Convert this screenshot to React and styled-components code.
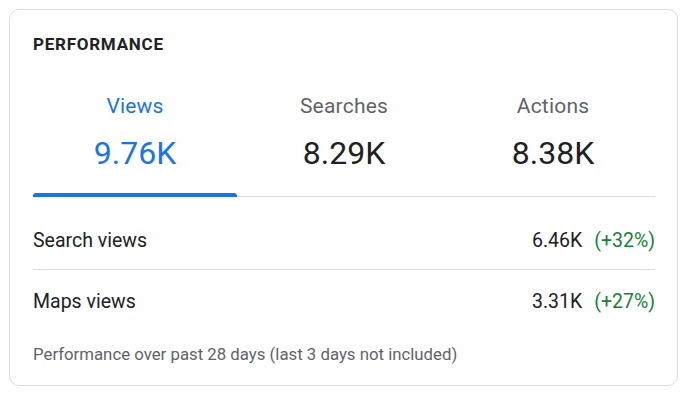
import React from 'react'
import styled, { createGlobalStyle } from 'styled-components'

const GlobalStyle = createGlobalStyle`
  body {
    margin: 0;
    background: #fff;
    font-family: Roboto, "Liberation Sans", Arial, sans-serif;
    color: #202124;
  }
`

const Page = styled.main`
  padding: 9px;
`

const Card = styled.section`
  box-sizing: border-box;
  width: 669px;
  height: 377px;
  border: 1px solid #dadce0;
  border-radius: 10px;
  padding: 24px 22px 0 23px;
  display: flex;
  flex-direction: column;
`

const Title = styled.h2`
  margin: 0;
  font-size: 17px;
  line-height: 20px;
  font-weight: 700;
  letter-spacing: 0.75px;
  color: #202124;
`

const Tabs = styled.div`
  display: grid;
  grid-template-columns: repeat(3, 1fr);
  column-gap: 5px;
  margin-top: 38px;
  border-bottom: 1px solid #dadce0;
`

const Tab = styled.div`
  display: flex;
  flex-direction: column;
  align-items: center;
  margin-bottom: -1px;
  color: ${p => (p.$active ? '#1a73e8' : '#5f6368')};
`

const TabLabel = styled.div`
  font-size: 21px;
  line-height: 28px;
  letter-spacing: 0.2px;
`

const TabValue = styled.div`
  margin-top: 13px;
  font-size: 32px;
  line-height: 40px;
  color: ${p => (p.$active ? '#1a73e8' : '#202124')};
`

const Indicator = styled.div`
  align-self: stretch;
  height: 4px;
  margin-top: 20px;
  border-radius: 3px 3px 0 0;
  background: ${p => (p.$active ? '#1a73e8' : 'transparent')};
`

const Rows = styled.div`
  margin-top: 15px;
`

const Row = styled.div`
  display: flex;
  align-items: center;
  padding: 17px 0 16px;
  font-size: 19.5px;
  line-height: 24px;
  & + & {
    border-top: 1px solid #dadce0;
    padding-top: 20px;
  }
`

const RowLabel = styled.span`
  flex: 1;
`

const RowValue = styled.span`
  color: #202124;
`

const Change = styled.span`
  margin-left: 12px;
  color: #188038;
`

const Footnote = styled.p`
  margin: 14px 0 0;
  font-size: 16.8px;
  line-height: 20px;
  color: #5f6368;
`

const tabs = [
  { label: 'Views', value: '9.76K', active: true },
  { label: 'Searches', value: '8.29K' },
  { label: 'Actions', value: '8.38K' },
]

const rows = [
  { label: 'Search views', value: '6.46K', change: '(+32%)' },
  { label: 'Maps views', value: '3.31K', change: '(+27%)' },
]

const App = () => (
  <Page>
    <GlobalStyle />
    <Card>
      <Title>PERFORMANCE</Title>
      <Tabs>
        {tabs.map(t => (
          <Tab key={t.label} $active={t.active}>
            <TabLabel>{t.label}</TabLabel>
            <TabValue $active={t.active}>{t.value}</TabValue>
            <Indicator $active={t.active} />
          </Tab>
        ))}
      </Tabs>
      <Rows>
        {rows.map(r => (
          <Row key={r.label}>
            <RowLabel>{r.label}</RowLabel>
            <RowValue>{r.value}</RowValue>
            <Change>{r.change}</Change>
          </Row>
        ))}
      </Rows>
      <Footnote>Performance over past 28 days (last 3 days not included)</Footnote>
    </Card>
  </Page>
)

export default App
